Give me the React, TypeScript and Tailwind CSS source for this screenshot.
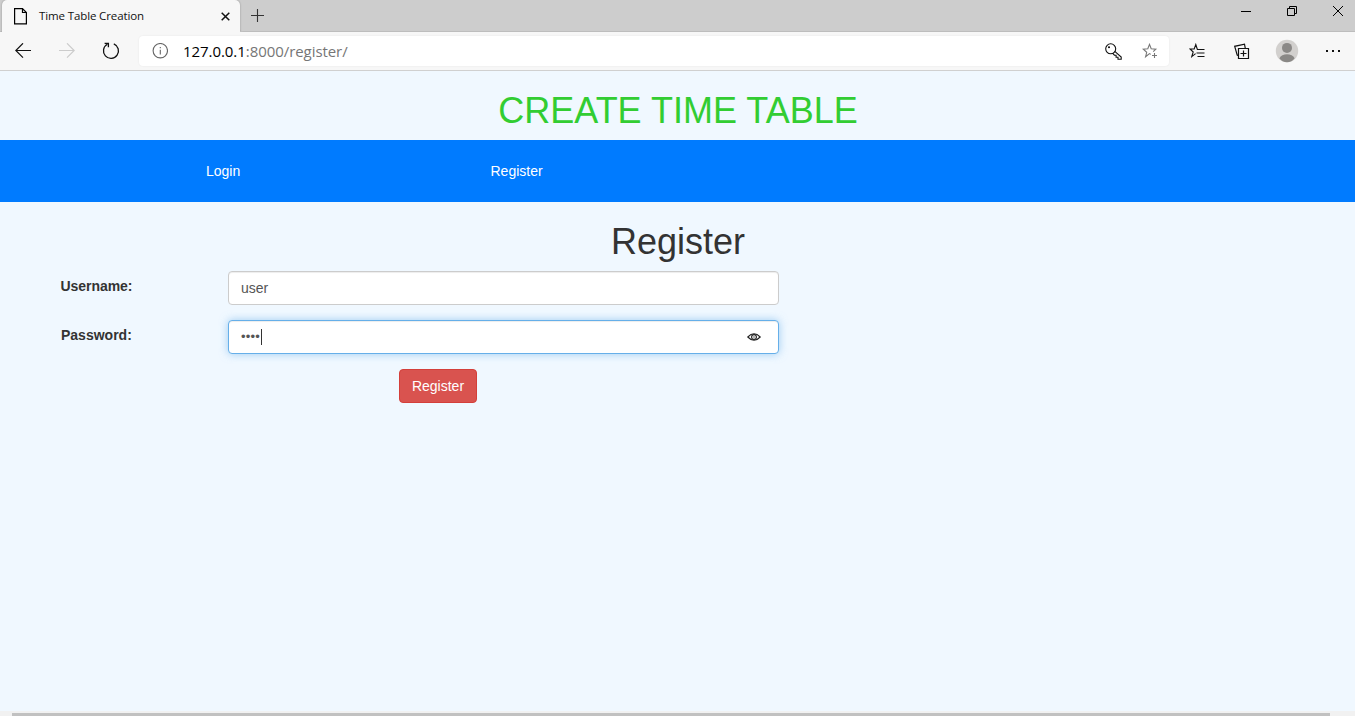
import React from "react";

const stroke = { fill: "none", stroke: "currentColor", strokeWidth: 1.2 } as const;

function TabStrip() {
  return (
    <div className="flex h-8 bg-[#cdcdcd] text-black">
      <div className="flex w-0.5 shrink-0 items-stretch border-b border-[#c0c0c0]" />
      <div className="flex w-[238px] shrink-0 items-center rounded-t-[5px] bg-[#f7f7f7] pr-2.5 pl-3 shadow-[0_0_2px_rgba(0,0,0,0.3)] [clip-path:inset(0_-3px_0_-3px)]">
        <svg width="13" height="17" viewBox="0 0 13 17" className="shrink-0" {...stroke}>
          <path d="M.6 .6H8.5L12.4 4.5V15.9H.6ZM8.5 .6V4.5H12.4" />
        </svg>
        <span className="ml-3 flex-1 font-['Open_Sans',sans-serif] text-[11.5px] tracking-[-0.12px] whitespace-nowrap text-[#111]">Time Table Creation</span>
        <svg width="9" height="9" viewBox="0 0 9 9" fill="none" stroke="#111" strokeWidth="1.5">
          <path d="M.7 .7L8.3 8.3M8.3 .7L.7 8.3" />
        </svg>
      </div>
      <div className="flex flex-1 items-start rounded-bl-[3px] border-b border-[#bdbdbd] pr-3 pl-[11px]">
        <svg width="13" height="13" viewBox="0 0 13 13" className="mt-[9px]" stroke="#333" strokeWidth="1.1">
          <path d="M6.5 0V13M0 6.5H13" />
        </svg>
        <div className="mt-1.5 ml-auto flex gap-9">
          <svg width="10" height="10" viewBox="0 0 10 10" stroke="#000">
            <path d="M0 5.5H10" />
          </svg>
          <svg width="10" height="10" viewBox="0 0 10 10" fill="none" stroke="#000">
            <path d="M.5 2.5H7.5V9.5H.5ZM2.5 2.5V.5H9.5V7.5H7.5" />
          </svg>
          <svg width="10" height="10" viewBox="0 0 10 10" stroke="#000">
            <path d="M0 0L10 10M10 0L0 10" />
          </svg>
        </div>
      </div>
    </div>
  );
}

function Star({ plus = false }: { plus?: boolean }) {
  return (
    <svg width="16" height="16" viewBox="0 0 16 16" className="shrink-0" {...stroke} strokeWidth={1.1}>
      {plus ? (
        <path d="M8.8 11.4L7.5 10.6L3.6 13.8L4.7 9.3L1.2 6.2L5.8 5.8L7.5 1.4L9.2 5.8L13.8 6.2L11.2 8.6M12.5 10V15M10 12.5H15" />
      ) : (
        <path d="M6.6 10.6L2.8 13.6L4.2 9L1 6H5.2L6.8 1.5L8.4 6.5M8 6.5H15.5M7.5 10H15.5M8.5 13.5H15.5" />
      )}
    </svg>
  );
}

function Toolbar() {
  return (
    <div className="flex h-[39px] items-center border-b border-[#d0d0d0] bg-[#f7f7f7] pl-[15px] text-[#111]">
      <svg width="16" height="16" viewBox="0 0 16 16" className="shrink-0" {...stroke}>
        <path d="M16 7.5H.8M8 .3L.8 7.5L8 14.7" />
      </svg>
      <svg width="16" height="16" viewBox="0 0 16 16" className="ml-7 shrink-0 text-[#ccc]" {...stroke}>
        <path d="M0 7.5H15.2M8 .3L15.2 7.5L8 14.7" />
      </svg>
      <svg width="18" height="18" viewBox="0 0 18 18" className="ml-[27px] shrink-0" {...stroke} strokeWidth={1.3}>
        <path d="M11.8 1.9A7.5 7.5 0 1 1 5.3 2.3M2.6 1.4H6.4V5.2" />
      </svg>
      <div className="ml-[19px] flex h-[30px] w-[1030px] shrink-0 items-center rounded bg-white pr-[11px] pl-[13px] shadow-[0_0_2px_rgba(0,0,0,0.08)]">
        <svg width="16" height="16" viewBox="0 0 16 16" className="shrink-0 text-[#666]" {...stroke} strokeWidth={1.1}>
          <circle cx="8.3" cy="7.7" r="7.2" />
          <path d="M8.3 6.7V11.5M8.3 4V5.2" />
        </svg>
        <span className="ml-[15px] flex-1 font-['Open_Sans',sans-serif] text-[15px] tracking-[-0.06px] text-black">
          127.0.0.1<span className="text-[#767676]">:8000/register/</span>
        </span>
        <svg width="17" height="17" viewBox="0 0 17 17" className="shrink-0" {...stroke} strokeWidth={1.1}>
          <circle cx="5.7" cy="5.8" r="5" />
          <path d="M9.8 8.4L16.2 14.1V16.2H13V14.2H11.1V12.2H9.4L7.8 10.4" />
          <circle cx="4" cy="4.3" r=".5" fill="currentColor" />
        </svg>
        <div className="ml-5 text-[#777]">
          <Star plus />
        </div>
      </div>
      <div className="ml-5">
        <Star />
      </div>
      <svg width="16" height="17" viewBox="0 0 16 17" className="ml-[29px] shrink-0" {...stroke}>
        <path d="M4.5 5.5H14.5V15.5H4.5ZM9.5 7.5V13.5M6.5 10.5H12.5M4.4 12.6L3.2 12.1L.7 3.3L10.5 1.2L11.3 5.3" />
      </svg>
      <svg width="24" height="24" viewBox="0 0 24 24" className="ml-[25px] shrink-0">
        <circle cx="12" cy="12" r="11.2" fill="#d2d0ce" />
        <circle cx="12" cy="8.9" r="5" fill="#8a8886" />
        <path d="M4.4 19.3C6.5 13.8 17.5 13.8 19.6 19.3Q16.7 23.2 12 23.2T4.4 19.3" fill="#8a8886" />
      </svg>
      <svg width="15" height="4" viewBox="0 0 15 4" className="ml-[27px] shrink-0" fill="#111">
        <path d="M0 1H2V3H0ZM6 1H8V3H6ZM12 1H14V3H12Z" />
      </svg>
    </div>
  );
}

export default function App() {
  return (
    <div className="flex h-[716px] w-[1355px] flex-col overflow-hidden bg-[#f0f8ff] font-['Noto_Sans',sans-serif]">
      <TabStrip />
      <Toolbar />
      <main className="flex-1 font-['Liberation_Sans',Arial,sans-serif] text-[14px] leading-5 text-[#333]">
        <h1 className="pt-5 pl-px text-center text-[36px] leading-[39px] text-[#32cd32]">CREATE TIME TABLE</h1>
        <nav className="mt-2.5 flex h-[62px] bg-[#007bff] pt-[21px] pl-[206px] text-white">
          <a className="w-[284.5px]">Login</a>
          <a>Register</a>
        </nav>
        <h2 className="pt-5 pl-px text-center text-[36px] leading-[39px]">Register</h2>
        <form className="mt-2.5 pl-[60.5px]">
          <div className="flex">
            <label className="w-[167.5px] pt-[5px] font-bold tracking-[-0.05px]">Username:</label>
            <div className="flex h-[34px] w-[551px] items-center rounded border border-[#ccc] bg-white px-3 text-[#555] shadow-[inset_0_1px_1px_rgba(0,0,0,0.075)]">
              user
            </div>
          </div>
          <div className="mt-[15px] flex">
            <label className="w-[167.5px] pt-[5px] pl-[0.5px] font-bold">Password:</label>
            <div className="flex h-[34px] w-[551px] items-center rounded border border-[#66afe9] bg-white pr-[17px] pl-3 text-[#555] shadow-[inset_0_1px_1px_rgba(0,0,0,0.075),0_0_8px_rgba(102,175,233,0.6)]">
              <span className="w-5 text-[13px] tracking-[0.2px]">••••</span>
              <span className="h-4 w-px bg-[#333]" />
              <svg width="14" height="8" viewBox="0 0 14 8" className="ml-auto" fill="none" stroke="#222" strokeWidth="1.1">
                <path d="M.8 4Q7 -2.6 13.2 4Q7 10.6 .8 4Z" />
                <circle cx="7" cy="4" r="2.4" />
                <circle cx="7" cy="4" r=".4" strokeWidth=".6" />
              </svg>
            </div>
          </div>
          <button
            type="button"
            className="mt-[15px] ml-[338.5px] flex h-[34px] w-[78px] items-center justify-center rounded border border-[#d43f3a] bg-[#d9534f] text-white"
          >
            Register
          </button>
        </form>
      </main>
      <div className="flex h-[5px] items-end bg-[#f1f1f1] pr-[25px] pl-3">
        <div className="h-[3px] flex-1 bg-[#c1c1c1]" />
      </div>
    </div>
  );
}
